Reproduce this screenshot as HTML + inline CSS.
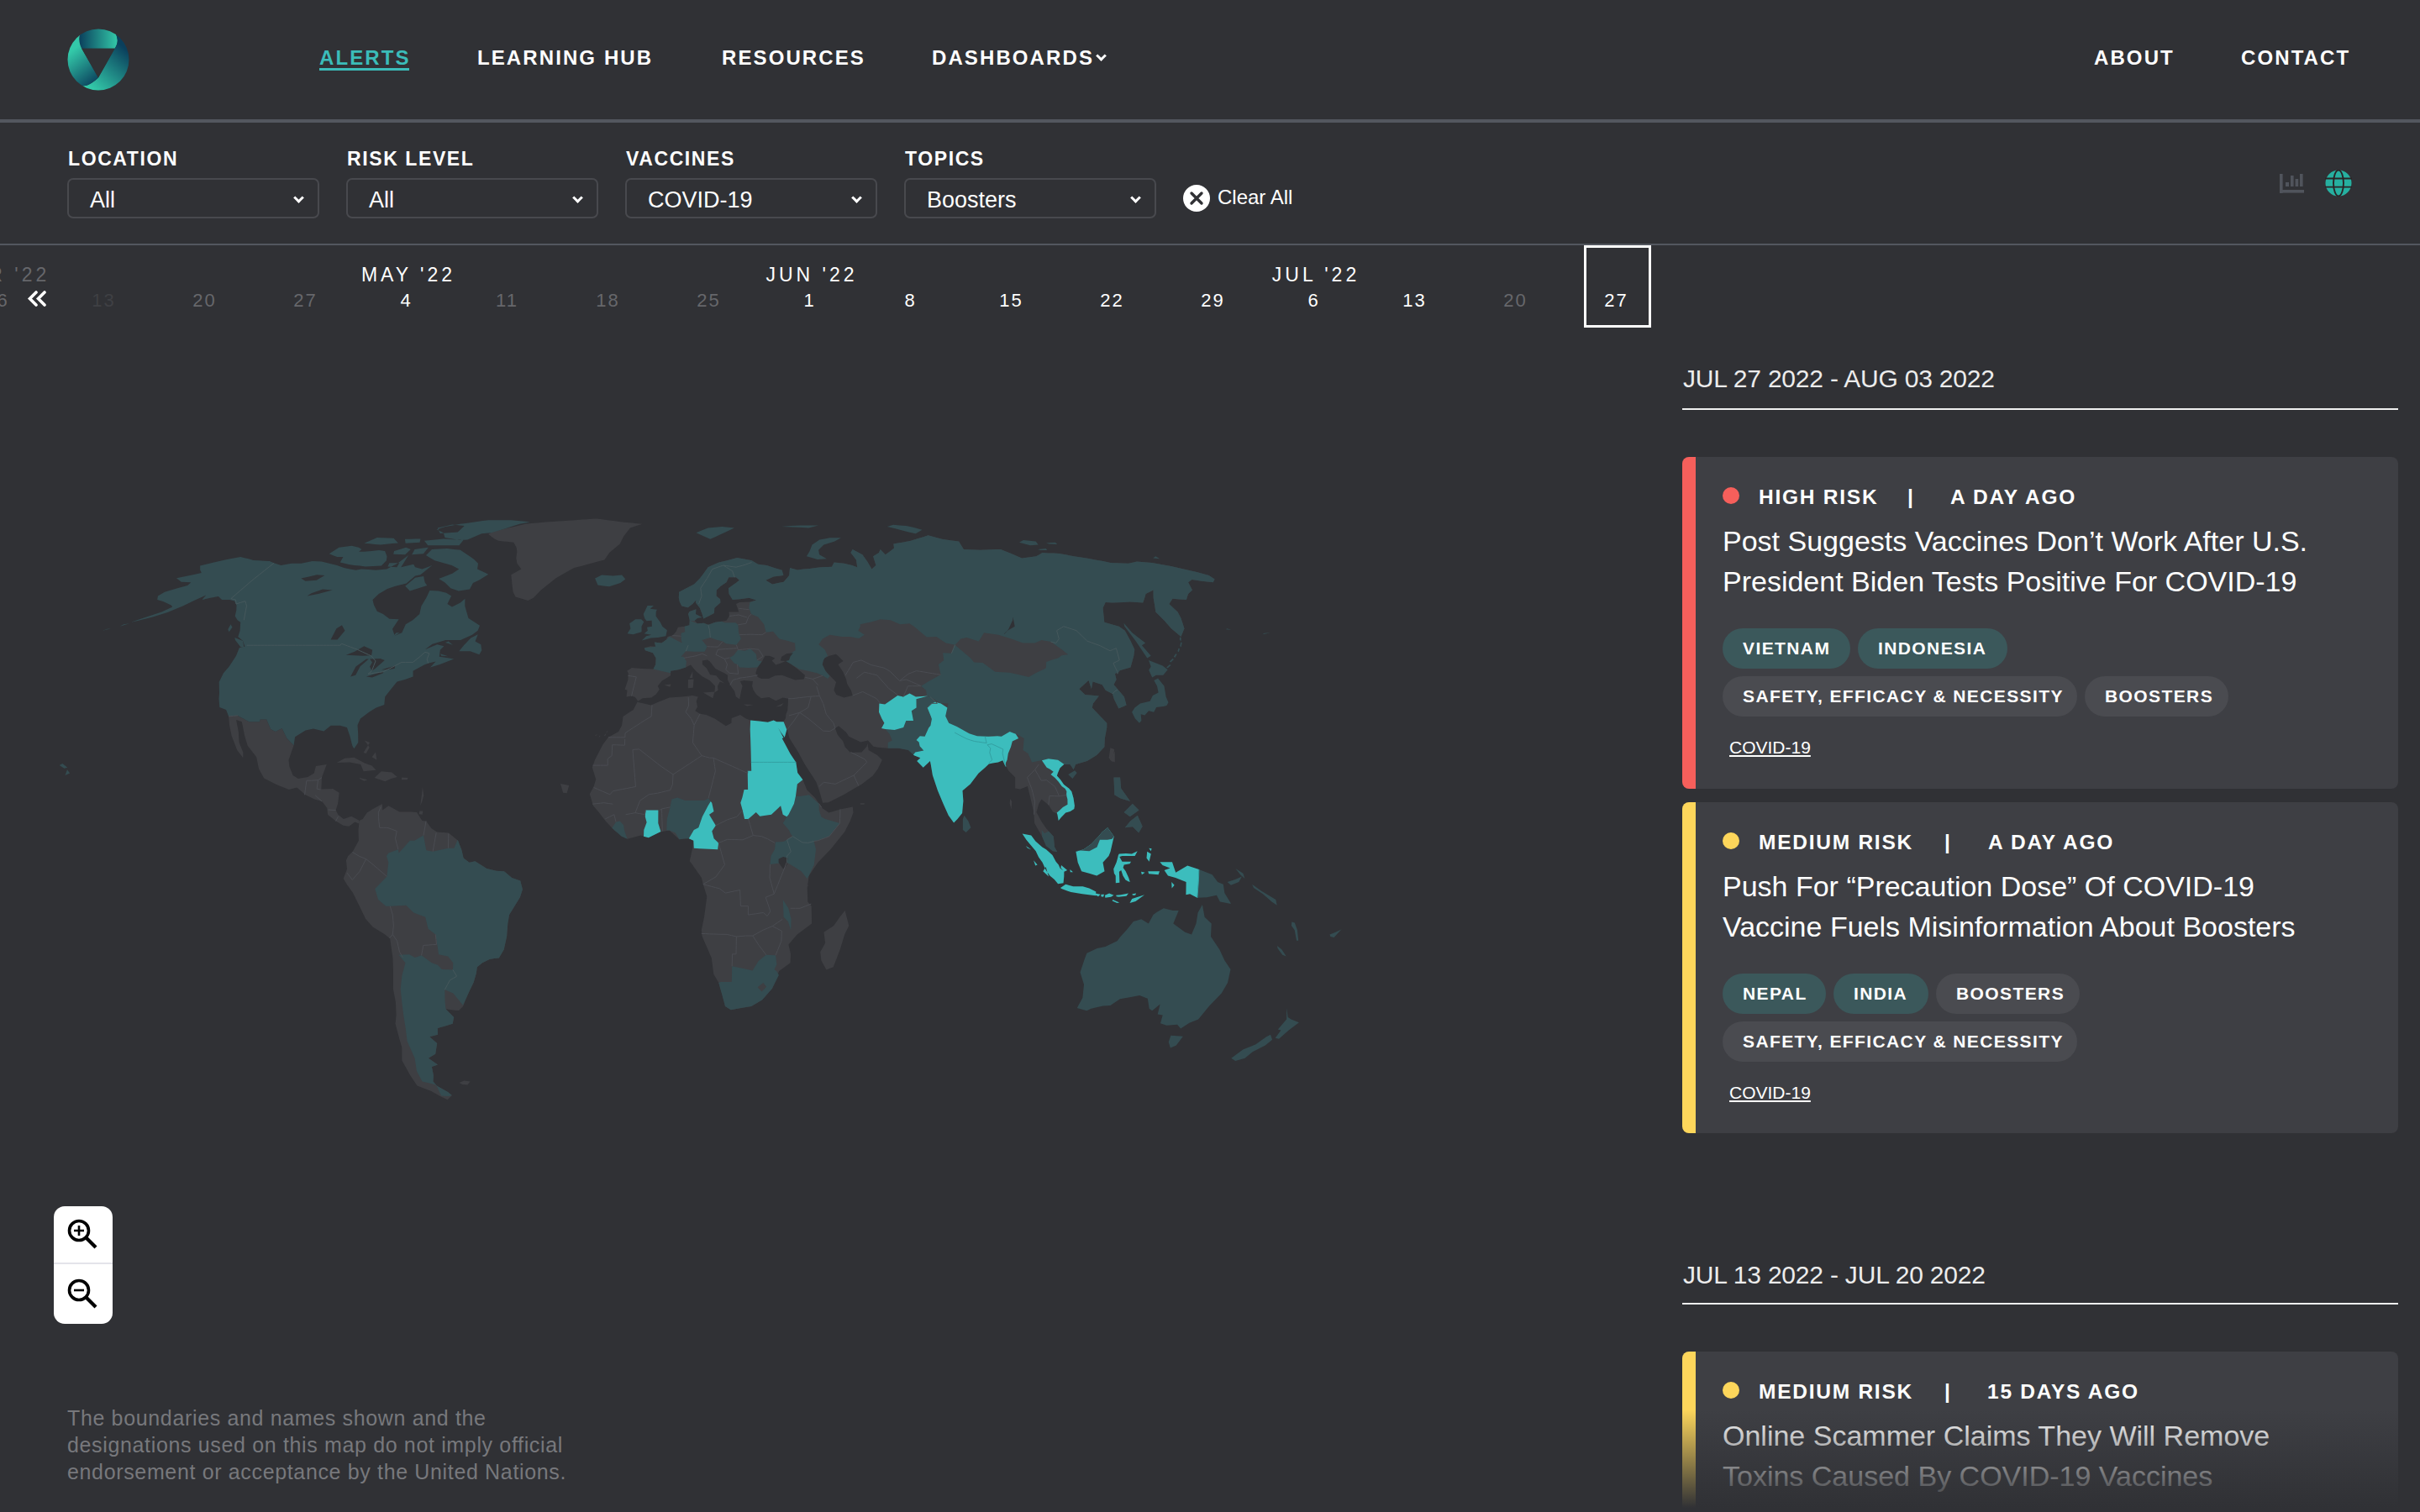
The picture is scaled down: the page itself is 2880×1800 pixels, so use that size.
<!DOCTYPE html>
<html><head><meta charset="utf-8">
<style>
*{margin:0;padding:0;box-sizing:border-box}
html,body{width:2880px;height:1800px;overflow:hidden;background:#303135;font-family:"Liberation Sans",sans-serif;color:#fff}
.a{position:absolute;white-space:nowrap}
.nav{font-weight:bold;font-size:24px;line-height:24px;letter-spacing:2.1px;color:#fff}
.flab{font-weight:bold;font-size:23px;line-height:23px;letter-spacing:1.6px;color:#fff}
.sel{position:absolute;top:212px;width:300px;height:48px;border:2px solid #48494e;border-radius:7px}
.sel span{position:absolute;left:25px;top:11px;font-size:27px;line-height:27px;color:#fff}
.sel i{position:absolute;right:18px;top:17px;width:9px;height:9px;border-right:3px solid #fff;border-bottom:3px solid #fff;transform:rotate(45deg)}
.mon{font-size:23px;line-height:23px;letter-spacing:4px;color:#e6e6e6}
.dt{font-size:22px;line-height:22px;letter-spacing:2px;text-align:center;width:100px;margin-left:-50px}
.w{color:#fff}.g{color:#66676b}.f{color:#3f4044}
.card{position:absolute;left:2002px;width:852px;background:#3e3f44;border-radius:8px;overflow:hidden}
.card .bar{position:absolute;left:0;top:0;bottom:0;width:16px}
.risk{position:absolute;left:91px;top:35px;font-weight:bold;font-size:24.5px;line-height:25px;letter-spacing:1.75px}
.dot{position:absolute;left:48px;top:36px;width:20px;height:20px;border-radius:50%}
.ttl{position:absolute;left:48px;top:76px;font-size:34px;line-height:48px;color:#fff;white-space:nowrap}
.pill{position:absolute;white-space:nowrap;height:48px;border-radius:24px;font-weight:bold;font-size:21px;line-height:48px;letter-spacing:1.4px;padding-left:24px;color:#fff}
.pt{background:#3b585b}.pg{background:#4a4b50}
.lnk{position:absolute;left:56px;font-size:21px;line-height:21px;color:#fff;text-decoration:underline}
.hdr{font-size:30px;line-height:30px;letter-spacing:-0.2px;color:#ececec}
.hline{position:absolute;left:2002px;width:852px;height:2px;background:#f0f0f0}
</style></head><body>
<!-- header -->
<svg class="a" style="left:76.5px;top:31px" width="80" height="80" viewBox="0 0 80 80">
<defs>
<clipPath id="cc"><circle cx="40" cy="40" r="36.5"/></clipPath>
<linearGradient id="lg1" x1="17" y1="18" x2="63" y2="18" gradientUnits="userSpaceOnUse"><stop offset="0" stop-color="#0a3f5c"/><stop offset="1" stop-color="#33c9a9"/></linearGradient>
<linearGradient id="lg2" x1="70" y1="25" x2="30" y2="72" gradientUnits="userSpaceOnUse"><stop offset="0" stop-color="#0a3f5c"/><stop offset="1" stop-color="#33c9a9"/></linearGradient>
<linearGradient id="lg3" x1="8" y1="30" x2="38" y2="68" gradientUnits="userSpaceOnUse"><stop offset="0" stop-color="#33c9a9"/><stop offset="1" stop-color="#0a3f5c"/></linearGradient>
</defs>
<g clip-path="url(#cc)">
<path d="M20.2 26.8L59.6 26.8C62 23 63.5 19 62.5 15C62 12 61 9.5 59.5 6L80 0L0 0L20.5 6C18.5 9 17 12 17.3 16C17.5 20 18.5 23.5 20.2 26.8Z" fill="url(#lg1)"/>
<path d="M59.6 26.8C62 23 63.5 19 62.5 15C62 12 61 9.5 59.5 6L80 0L80 80L10 80L22 71.3C26 71 29 70 32.5 67.5C35.5 65.5 38 63.5 40 61.4Z" fill="url(#lg2)"/>
<path d="M40 61.4C38 63.5 35.5 65.5 32.5 67.5C29 70 26 71 22 71.3L10 80L0 80L0 0L20.5 6C18.5 9 17 12 17.3 16C17.5 20 18.5 23.5 20.2 26.8Z" fill="url(#lg3)"/>
<path d="M20.2 26.8L59.6 26.8L40 61.4Z" fill="#303135"/>
</g>
</svg>
<div class="a nav" style="left:380px;top:57px;color:#3bbcb9">ALERTS</div>
<div class="a" style="left:380px;top:81px;width:107px;height:3px;background:#3bbcb9"></div>
<div class="a nav" style="left:568px;top:57px">LEARNING HUB</div>
<div class="a nav" style="left:859px;top:57px">RESOURCES</div>
<div class="a nav" style="left:1109px;top:57px">DASHBOARDS</div>
<div class="a" style="left:1306px;top:62px;width:9px;height:9px;border-right:3px solid #fff;border-bottom:3px solid #fff;transform:rotate(45deg)"></div>
<div class="a nav" style="left:2492px;top:57px">ABOUT</div>
<div class="a nav" style="left:2667px;top:57px">CONTACT</div>
<div class="a" style="left:0;top:142px;width:2880px;height:4px;background:#53575f"></div>

<!-- filters -->
<div class="a flab" style="left:81px;top:178px">LOCATION</div>
<div class="a flab" style="left:413px;top:178px">RISK LEVEL</div>
<div class="a flab" style="left:745px;top:178px">VACCINES</div>
<div class="a flab" style="left:1077px;top:178px">TOPICS</div>
<div class="sel" style="left:80px"><span>All</span><i></i></div>
<div class="sel" style="left:412px"><span>All</span><i></i></div>
<div class="sel" style="left:744px"><span>COVID-19</span><i></i></div>
<div class="sel" style="left:1076px"><span>Boosters</span><i></i></div>
<svg class="a" style="left:1408px;top:220px" width="32" height="32" viewBox="0 0 32 32"><circle cx="16" cy="16" r="16" fill="#fff"/><path d="M10 10L22 22M22 10L10 22" stroke="#303135" stroke-width="3.4" stroke-linecap="round"/></svg>
<div class="a" style="left:1449px;top:223px;font-size:24px;line-height:24px;color:#fff">Clear All</div>
<svg class="a" style="left:2712px;top:206px" width="32" height="26" viewBox="0 0 32 26"><g fill="#50545c"><rect x="1" y="1" width="3.6" height="23"/><rect x="1" y="20" width="29" height="3.6"/><rect x="8" y="11" width="4" height="5"/><rect x="14" y="3" width="3.6" height="13"/><rect x="19.6" y="7" width="3.6" height="9"/><rect x="25" y="1" width="3.6" height="15"/></g></svg>
<svg class="a" style="left:2767px;top:202px" width="32" height="32" viewBox="0 0 32 32"><circle cx="16" cy="16" r="15.5" fill="#26b0a0"/><g stroke="#2b2426" stroke-width="1.9" fill="none"><path d="M0 10.5H32M0 20.6H32"/><ellipse cx="16" cy="16" rx="6" ry="15.5"/></g></svg>
<div class="a" style="left:0;top:290px;width:2880px;height:2px;background:#53575f"></div>

<!-- timeline -->
<div id="tl">
<div class="a dt w" style="left:1923.5px;top:347px">27</div>
<div class="a dt g" style="left:1803.5px;top:347px">20</div>
<div class="a dt w" style="left:1683.5px;top:347px">13</div>
<div class="a dt w" style="left:1563.5px;top:347px">6</div>
<div class="a dt w" style="left:1443.5px;top:347px">29</div>
<div class="a dt w" style="left:1323.5px;top:347px">22</div>
<div class="a dt w" style="left:1203.5px;top:347px">15</div>
<div class="a dt w" style="left:1083.5px;top:347px">8</div>
<div class="a dt w" style="left:963.5px;top:347px">1</div>
<div class="a dt g" style="left:843.5px;top:347px">25</div>
<div class="a dt g" style="left:723.5px;top:347px">18</div>
<div class="a dt g" style="left:603.5px;top:347px">11</div>
<div class="a dt w" style="left:483.5px;top:347px">4</div>
<div class="a dt g" style="left:363.5px;top:347px">27</div>
<div class="a dt g" style="left:243.5px;top:347px">20</div>
<div class="a dt f" style="left:123.5px;top:347px">13</div>
<div class="a dt g" style="left:3.5px;top:347px">6</div>
<div class="a mon w" style="left:386.0px;width:200px;text-align:center;top:316px">MAY '22</div>
<div class="a mon w" style="left:866.0px;width:200px;text-align:center;top:316px">JUN '22</div>
<div class="a mon w" style="left:1466.0px;width:200px;text-align:center;top:316px">JUL '22</div>
<div class="a mon g" style="left:-96.5px;width:200px;text-align:center;top:316px">APR '22</div>
<div class="a" style="left:1885px;top:292px;width:80px;height:98px;border:3px solid #fff"></div>
<svg class="a" style="left:32px;top:346px" width="24" height="19" viewBox="0 0 24 19"><path d="M11 2L3.5 9.5L11 17M21 2L13.5 9.5L21 17" stroke="#fff" stroke-width="3.6" fill="none" stroke-linecap="round" stroke-linejoin="miter"/></svg>
</div>

<!-- map -->
<div id="map"><svg class="a" style="left:0;top:0" width="1700" height="1400" viewBox="0 0 1700 1400"><path fill="#3e3f43" d="M272.2 852.9L273.0 863.3L275.7 876.3L282.2 892.9L289.3 902.2L289.3 895.5L284.6 884.1L283.8 871.1L281.1 857.1L287.8 859.2L291.2 876.3L294.7 887.7L305.2 901.2L308.0 915.2L314.2 926.6L328.9 933.9L343.8 940.1L353.3 937.5L363.5 946.3L374.3 951.5L383.2 954.1L389.3 961.9L390.0 969.7L399.6 977.5L408.5 982.7L415.3 983.7L422.4 978.5L427.3 980.6L427.1 976.4L418.2 971.8L408.9 974.9L402.3 969.7L399.6 964.5L402.1 956.7L403.7 943.8L396.1 939.1L382.4 939.6L383.0 925.6L388.8 910.0L375.9 912.1L373.8 920.4L366.3 925.1L354.8 927.1L348.6 923.0L344.4 912.6L343.5 904.8L349.6 887.2L341.4 878.9L335.6 866.9L327.9 871.1L322.1 868.0L317.2 856.6L309.7 856.6L308.8 859.2L296.5 859.2L283.1 851.9ZM581.2 636.1L585.0 639.0L588.9 641.8L593.2 643.8L599.2 644.4L605.2 645.0L611.3 645.7L614.6 651.8L615.3 656.8L614.3 664.4L615.4 670.8L620.3 677.5L608.3 684.2L609.3 694.6L610.6 704.8L613.5 710.4L620.9 712.7L628.4 715.1L634.8 711.8L643.8 702.5L661.6 688.2L672.5 682.1L683.1 676.1L690.5 674.2L697.8 672.2L705.0 670.3L712.2 668.3L719.4 666.5L725.2 658.1L737.7 647.6L742.5 638.0L750.0 628.4L757.2 626.1L764.3 623.8L758.2 623.2L752.2 622.6L746.3 622.0L740.3 621.4L735.2 620.7L730.0 620.0L724.9 619.4L719.9 618.7L714.8 618.0L709.9 617.4L704.2 617.8L698.6 618.2L692.9 618.6L687.2 619.0L681.4 619.4L675.7 619.8L669.9 620.2L664.2 620.6L658.4 620.9L652.6 621.3L646.7 621.7L639.6 622.4L632.4 623.1L625.2 623.8L612.1 626.9L603.6 628.7L594.8 630.9L585.8 633.0ZM400.8 907.9L410.1 902.8L421.5 901.7L434.0 908.5L442.5 911.6L447.6 916.8L432.6 918.3L429.3 910.0L416.2 907.4ZM445.6 926.1L453.8 918.3L466.3 919.4L472.8 925.1L465.4 927.1L458.3 930.3ZM428.0 926.1L437.3 928.2L433.5 929.7L427.9 927.1ZM478.2 925.6L485.4 926.1L484.7 928.2L477.9 928.2ZM427.3 980.6L426.5 987.9L426.9 1000.8L419.8 1013.8L414.2 1019.0L411.9 1024.2L413.0 1034.6L408.7 1046.0L412.7 1052.7L420.0 1063.1L427.8 1078.7L435.0 1093.7L443.6 1103.6L458.2 1112.4L464.2 1117.6L465.8 1129.3L467.5 1141.0L468.0 1156.5L468.0 1166.9L467.9 1177.3L470.9 1192.9L471.6 1208.4L470.5 1218.8L475.3 1236.8L478.3 1247.1L478.4 1262.4L488.1 1280.1L496.4 1292.5L513.2 1299.0L523.8 1304.9L532.6 1309.3L537.9 1303.9L533.0 1299.9L519.8 1292.5L515.5 1287.5L515.9 1280.1L513.9 1270.0L521.0 1267.4L509.9 1259.8L518.2 1254.8L520.2 1241.9L511.3 1234.2L521.0 1231.7L520.9 1223.9L529.8 1221.4L538.7 1218.8L540.2 1211.0L530.5 1201.2L541.2 1202.7L546.0 1203.1L551.1 1198.1L554.0 1190.3L558.6 1179.9L563.7 1169.5L566.7 1159.1L567.9 1151.3L574.1 1146.2L582.7 1142.0L588.4 1141.0L593.8 1140.4L599.7 1130.6L603.1 1115.0L604.3 1099.4L606.1 1089.1L612.4 1078.7L618.9 1068.3L621.9 1058.7L619.3 1048.6L609.2 1045.0L600.0 1037.2L590.8 1036.7L579.3 1034.1L565.4 1025.2L558.6 1026.8L551.6 1021.6L549.5 1012.3L545.1 1000.8L533.9 991.5L520.2 990.5L513.5 986.3L507.0 977.5L502.4 977.0L496.0 967.1L489.2 966.6L475.5 966.6L462.4 959.3L455.2 964.5L454.9 956.9L443.9 963.0L436.7 967.6L431.7 974.9L427.5 977.0ZM546.4 1289.0L552.5 1286.5L559.6 1287.5L556.5 1291.5L550.4 1291.0ZM759.4 834.8L755.8 830.1L751.6 828.6L745.5 829.6L746.5 821.8L743.6 820.8L747.4 809.0L747.7 801.3L746.2 798.7L751.9 795.1L764.2 796.1L777.5 796.6L780.2 791.0L780.6 783.4L776.9 777.3L767.8 774.3L766.8 771.2L774.2 769.2L780.2 769.7L778.8 764.6L787.2 765.6L792.9 761.6L794.3 758.1L800.7 756.2L804.7 751.7L806.8 746.7L814.6 745.7L820.4 744.2L820.8 735.9L819.0 731.0L820.5 728.1L828.4 725.3L828.0 731.0L826.2 738.3L830.0 742.3L837.7 741.8L842.8 743.8L851.2 740.8L858.8 739.8L864.5 738.8L867.9 733.5L867.5 728.6L879.2 728.6L876.0 719.0L880.2 717.0L892.3 716.6L900.1 714.6L893.5 711.8L880.9 713.2L871.8 714.1L867.5 707.1L866.9 700.2L876.7 693.2L879.9 690.8L876.0 687.3L867.3 687.3L864.5 693.2L857.8 697.8L852.8 702.5L852.5 709.5L857.1 713.2L857.4 717.5L850.3 723.8L849.9 730.1L843.2 733.5L837.2 736.4L835.6 731.0L832.8 723.8L827.9 717.5L828.3 714.6L824.2 719.0L818.7 723.3L811.3 721.4L808.8 716.6L807.8 711.8L808.1 704.8L815.3 701.1L826.0 695.5L832.9 688.6L837.8 681.9L842.6 675.2L849.1 672.3L855.5 669.5L865.2 667.3L877.1 664.0L884.5 665.2L894.7 667.3L902.2 671.7L912.5 673.0L921.5 675.9L930.7 678.8L932.4 685.0L920.7 686.4L911.3 690.8L919.2 695.5L925.9 694.1L932.6 692.7L939.2 685.0L940.0 676.1L949.1 678.4L956.2 677.6L963.3 676.9L970.3 676.1L976.6 675.2L983.3 675.0L989.9 674.8L992.6 669.5L1004.7 670.8L1014.1 673.0L1020.2 675.2L1018.9 666.5L1012.4 658.1L1014.6 653.9L1026.4 660.2L1032.2 668.6L1037.5 677.5L1042.4 673.0L1039.1 662.3L1045.9 658.1L1047.7 653.9L1053.7 660.2L1059.0 656.4L1064.0 652.6L1063.3 647.6L1068.5 646.6L1073.7 645.7L1078.8 644.7L1083.9 643.8L1089.2 642.1L1094.4 640.5L1099.5 638.9L1104.5 637.2L1121.1 641.8L1131.1 643.2L1141.1 644.5L1146.9 653.9L1153.5 654.2L1160.1 654.4L1166.7 654.7L1172.8 654.5L1178.8 654.3L1184.9 654.1L1191.0 653.9L1203.4 659.1L1216.1 664.4L1221.8 663.7L1227.4 663.0L1233.0 662.3L1236.8 660.2L1240.5 658.1L1247.2 658.4L1254.0 658.6L1260.8 658.9L1269.5 660.6L1278.2 662.3L1286.5 663.5L1294.8 664.8L1303.7 666.5L1312.8 668.1L1321.7 669.9L1328.7 670.2L1335.7 670.5L1342.7 670.8L1347.8 669.7L1352.9 668.6L1362.1 669.2L1371.3 669.9L1382.4 671.9L1393.6 673.9L1408.8 677.5L1424.3 681.0L1438.8 685.0L1445.6 689.5L1443.8 693.2L1429.7 691.8L1418.5 689.9L1414.1 693.2L1419.0 702.5L1414.1 707.1L1411.9 714.1L1403.7 713.4L1395.5 712.7L1391.4 719.0L1401.6 728.6L1405.5 735.9L1409.5 748.2L1405.5 758.1L1393.9 748.2L1385.1 738.3L1375.3 728.6L1374.1 720.2L1372.6 711.8L1372.5 702.5L1368.1 704.8L1363.6 707.1L1362.1 712.3L1360.3 717.5L1352.5 717.0L1344.7 716.6L1337.6 716.9L1330.6 717.2L1323.5 717.5L1315.7 717.0L1312.6 723.8L1314.3 740.8L1331.7 745.7L1338.8 750.7L1345.5 763.1L1350.3 773.2L1349.3 780.8L1345.5 794.6L1332.6 798.2L1327.0 802.3L1328.6 809.0L1325.5 815.1L1337.9 829.6L1340.6 839.4L1331.3 843.6L1325.8 832.2L1323.9 826.0L1315.7 821.8L1311.5 815.1L1300.5 811.5L1298.9 820.3L1295.5 810.0L1288.1 816.7L1284.4 820.3L1291.4 827.0L1307.9 828.6L1300.9 837.4L1299.8 842.5L1309.8 852.9L1317.3 860.7L1317.3 865.9L1314.9 878.9L1314.4 889.3L1305.2 899.1L1293.8 905.9L1280.2 910.0L1277.6 916.2L1273.4 910.0L1266.2 910.0L1261.5 914.2L1258.8 920.4L1257.9 923.5L1262.1 928.2L1266.1 933.9L1272.1 938.6L1275.3 942.2L1277.5 950.0L1278.9 959.3L1278.3 963.0L1273.6 966.1L1268.2 967.6L1262.7 973.3L1259.7 977.0L1260.2 969.7L1253.1 966.6L1247.8 958.3L1239.5 951.5L1236.3 956.7L1233.5 967.1L1239.2 977.5L1245.1 986.3L1253.8 995.7L1255.1 1008.6L1258.4 1014.3L1252.9 1013.3L1244.9 1007.1L1240.1 995.7L1231.1 980.1L1230.3 967.1L1226.7 951.5L1222.9 936.0L1214.2 939.6L1208.2 938.6L1208.1 925.6L1200.4 917.8L1196.2 910.0L1193.3 905.3L1187.8 907.4L1181.2 908.5L1176.8 909.5L1172.4 913.7L1164.6 920.4L1154.7 933.4L1145.5 941.2L1146.4 953.6L1145.1 968.1L1139.5 974.9L1135.1 979.6L1128.8 970.7L1122.5 956.7L1116.0 941.2L1109.9 923.0L1107.7 910.0L1106.9 905.9L1098.7 913.7L1091.2 905.9L1095.3 902.2L1088.3 899.6L1081.0 892.9L1069.6 890.8L1056.7 890.8L1045.0 889.8L1039.5 888.7L1032.9 881.5L1024.3 883.5L1010.3 876.8L1006.7 871.6L998.0 864.3L993.9 866.9L996.8 874.7L1003.3 882.5L1005.7 889.3L1012.0 896.0L1025.4 895.5L1031.5 888.7L1032.4 885.1L1033.7 892.9L1044.0 899.1L1049.8 904.8L1044.8 915.2L1038.7 923.5L1025.7 933.4L1017.0 938.6L1003.8 946.3L994.9 950.8L985.9 955.2L979.1 955.7L975.0 941.2L971.3 930.8L964.6 920.4L957.8 910.0L949.4 894.4L939.6 878.9L936.8 868.5L936.3 868.5L933.8 877.8L926.1 866.4L924.3 859.2L932.6 859.2L934.9 855.0L935.4 850.3L937.2 845.7L937.8 837.4L938.1 831.7L931.5 830.6L923.3 834.3L915.2 830.1L905.8 831.2L900.4 827.0L896.7 821.8L895.1 816.7L895.9 811.0L885.3 810.0L880.8 811.0L883.6 816.7L881.9 823.4L880.2 832.2L875.8 829.6L874.2 822.9L869.7 816.7L865.9 809.0L866.1 803.8L861.8 801.3L851.3 796.1L844.8 787.4L841.9 785.4L835.8 786.4L835.9 791.0L840.9 795.6L845.2 803.3L852.3 804.3L856.7 809.5L862.3 813.6L856.8 811.5L854.0 816.7L854.6 821.8L850.4 824.4L851.0 816.7L844.5 810.0L836.1 805.4L828.5 799.2L821.9 791.5L816.1 794.6L807.3 797.2L798.2 798.7L798.0 804.3L793.7 806.9L787.7 810.5L782.8 816.7L784.8 820.8L780.8 826.5L775.1 830.6L764.7 831.2ZM758.5 835.8L774.7 839.4L783.5 835.8L796.5 830.6L811.5 829.6L824.4 828.1L830.8 829.6L828.7 834.8L830.0 841.5L827.4 846.2L833.1 849.8L840.5 850.9L850.6 855.5L863.9 864.3L870.4 860.7L870.7 855.0L881.0 850.9L887.7 855.5L893.1 857.6L903.4 858.6L913.8 859.7L920.6 857.6L924.3 859.2L926.1 866.4L930.7 878.9L940.6 897.6L946.9 907.4L949.2 919.9L955.4 928.2L960.4 940.6L969.8 949.5L977.9 961.4L979.3 962.4L986.3 967.6L999.9 963.5L1014.8 960.4L1015.5 967.6L1011.7 977.5L1005.1 990.5L996.8 1000.8L988.4 1011.2L973.4 1026.8L962.7 1042.4L960.7 1056.9L961.3 1073.5L965.7 1078.7L965.9 1089.1L966.0 1099.4L948.7 1112.4L938.4 1124.4L941.0 1135.8L940.6 1146.2L927.2 1156.0L923.1 1166.4L919.0 1176.8L907.2 1190.3L894.2 1198.1L882.0 1200.1L869.8 1202.2L863.0 1198.1L861.4 1190.3L855.3 1170.0L849.3 1159.7L846.8 1140.4L841.3 1127.7L835.7 1115.0L834.8 1107.2L838.0 1091.7L839.7 1079.5L841.3 1067.3L836.8 1052.7L834.9 1045.0L822.1 1026.8L820.7 1025.2L824.4 1008.6L825.3 1000.8L819.8 998.2L808.4 999.3L796.5 988.4L785.5 990.5L780.0 993.1L771.8 997.2L762.6 994.6L746.6 998.8L731.6 988.9L720.7 977.5L712.7 967.1L706.0 959.3L701.8 945.3L706.7 936.0L709.2 927.7L704.8 913.7L707.9 904.8L717.6 886.1L723.9 877.8L736.1 871.1L740.0 863.8L741.5 852.9L750.1 847.2L753.7 845.1ZM1005.6 1083.9L1010.3 1102.0L1005.2 1112.4L999.7 1130.6L995.7 1141.0L991.7 1151.3L983.4 1154.5L977.4 1143.6L976.2 1133.2L982.1 1122.8L980.5 1109.8L992.2 1102.0L999.4 1091.7ZM1319.6 902.2L1321.4 890.3L1326.2 891.9L1324.1 907.4ZM820.6 806.9L824.3 799.2L824.3 806.9ZM818.8 819.3L818.9 809.0L825.6 808.4L824.8 818.7ZM836.7 824.4L850.3 823.4L848.4 831.2ZM884.8 838.4L896.9 838.9L889.2 840.5ZM923.0 841.5L932.5 836.9L929.9 840.5ZM1326.2 946.3L1325.9 936.0L1325.4 925.6L1333.1 925.6L1334.2 938.6L1345.2 954.1L1333.5 950.5ZM1338.8 985.3L1345.1 977.5L1353.8 970.7L1359.7 983.7L1355.2 991.5L1347.9 984.2ZM1337.5 967.1L1347.8 956.7L1355.5 964.5L1344.8 972.3Z"/><path fill="#344c51" d="M326.1 670.3L320.7 668.1L314.3 667.7L307.8 667.3L301.4 666.9L295.9 665.2L291.0 664.2L286.3 663.1L270.0 666.0L254.6 669.5L238.1 673.5L238.2 678.4L239.8 681.9L229.7 684.2L219.9 686.2L210.0 688.2L215.7 692.7L227.3 693.2L223.2 696.9L211.1 700.2L196.0 704.8L187.9 709.5L187.2 714.1L194.1 716.1L198.9 718.2L203.7 720.4L205.2 722.4L192.4 728.6L174.2 734.4L155.6 740.8L162.9 739.3L181.8 734.4L199.3 729.1L217.5 721.4L233.0 714.1L245.3 708.5L240.3 714.1L250.4 711.8L259.9 709.9L264.1 714.1L273.2 714.1L279.1 715.6L281.5 720.4L281.3 726.2L279.7 733.5L282.6 738.3L286.2 740.8L286.0 743.3L285.6 750.7L283.3 758.1L289.1 763.1L291.4 769.7L284.8 771.2L281.0 780.8L272.7 793.6L266.0 801.3L260.7 812.0L261.0 825.5L260.5 831.7L261.3 842.0L269.1 845.1L272.2 852.9L283.1 851.9L296.5 859.2L308.8 859.2L309.7 856.6L317.2 856.6L322.1 868.0L327.9 871.1L335.6 866.9L341.4 878.9L349.6 887.2L351.1 877.3L363.6 869.5L372.9 867.5L385.4 870.6L393.7 863.8L404.7 863.8L412.9 865.9L416.4 876.3L419.3 887.7L421.3 891.3L426.3 884.1L426.2 873.7L425.5 863.3L428.9 855.5L439.9 847.2L447.7 842.5L457.3 838.9L458.2 829.6L465.4 820.3L472.5 811.5L481.9 809.0L491.6 805.4L491.5 798.7L504.8 791.5L510.1 789.5L518.6 787.4L512.0 794.6L523.5 791.0L540.2 784.4L534.4 783.4L522.8 781.8L523.8 773.7L528.4 769.2L520.3 767.2L505.9 773.2L514.5 766.7L530.3 762.1L539.2 762.1L548.2 762.1L561.9 755.7L568.6 750.7L571.0 744.7L564.9 740.8L557.5 735.9L555.3 728.6L553.3 721.4L553.4 712.7L547.9 717.5L538.0 722.4L532.4 719.0L537.1 709.5L531.1 705.8L521.8 703.4L511.4 703.0L507.3 711.8L501.4 721.4L499.3 731.0L491.2 738.3L482.8 743.3L478.3 753.2L469.7 756.7L467.0 748.7L474.6 737.3L463.5 736.8L455.9 731.0L448.8 727.7L444.9 719.9L443.5 714.1L450.8 707.1L461.0 701.1L470.6 697.8L483.6 694.6L494.2 685.5L500.4 684.2L514.3 673.0L502.4 677.5L494.1 675.2L492.1 671.7L477.3 675.2L486.1 661.0L473.0 670.8L460.2 677.5L447.2 678.8L438.5 678.1L429.9 677.5L423.5 678.8L416.4 677.5L409.4 676.1L401.0 673.0L391.8 670.8L382.7 668.6L371.7 668.1L358.6 670.8L347.1 670.8L334.3 673.0ZM559.0 701.6L545.8 703.4L536.3 700.2L529.5 693.6L522.2 689.0L538.3 682.8L546.2 677.5L537.6 673.0L531.4 671.2L525.3 669.5L517.3 667.3L512.1 664.2L507.0 661.0L514.0 653.9L523.0 653.5L532.1 653.0L540.0 653.9L547.9 654.7L551.9 657.5L556.0 660.2L560.1 663.1L564.2 666.0L569.0 670.8L568.1 677.5L574.6 680.6L581.2 683.7L569.9 690.8L562.9 694.1ZM453.9 673.5L444.3 673.9L434.7 674.4L428.2 673.6L421.7 672.9L415.2 672.1L410.0 670.8L404.8 669.5L408.8 662.3L422.1 656.8L433.3 656.8L442.2 656.0L451.1 655.1L458.1 656.0L460.5 662.3L459.9 667.3ZM420.1 662.3L410.7 662.7L401.3 663.1L396.5 661.2L391.8 659.3L403.4 651.8L411.1 650.7L418.6 649.7L426.9 651.8L430.5 653.9ZM556.4 642.6L573.2 635.3L584.7 634.2L599.0 630.0L608.8 626.7L618.3 623.8L630.5 621.4L624.9 620.8L619.4 620.3L613.8 619.7L608.3 619.2L602.9 619.2L597.5 619.2L592.1 619.2L586.6 619.2L581.2 619.2L574.5 620.1L567.8 621.1L561.1 622.0L554.2 622.9L547.4 623.8L538.8 625.4L530.2 626.9L519.6 630.3L523.6 632.3L527.7 634.2L529.5 639.9L535.2 641.0L541.1 642.0L546.9 643.0ZM546.4 649.3L540.2 649.3L534.0 649.3L527.8 649.3L521.6 649.3L515.4 649.3L509.2 649.3L505.0 643.8L512.6 643.0L520.1 642.2L527.6 641.5L533.5 641.8L539.5 642.2L545.5 642.6L551.5 643.0ZM473.9 646.4L466.8 647.1L459.8 647.7L452.8 648.4L446.2 647.9L439.8 647.3L433.4 646.8L448.7 639.9L455.3 640.2L461.9 640.4L468.5 640.7L471.1 643.6ZM482.2 660.2L475.2 660.0L468.2 659.8L469.1 656.0L483.2 651.8L488.8 653.9ZM503.9 659.3L497.0 659.8L490.2 660.2L493.5 653.9L501.7 652.8L509.8 651.8ZM544.7 633.4L537.8 633.9L530.8 634.4L523.8 634.9L522.2 631.7L520.7 628.4L529.5 626.4L538.1 624.4L542.9 624.9L547.8 625.5L552.7 626.0ZM499.5 645.7L491.1 646.3L482.6 646.8L481.9 641.8L488.1 641.7L494.3 641.6L500.5 641.5ZM508.3 696.9L498.1 700.2L487.8 703.4L482.2 697.8L494.1 687.7L504.1 685.9L505.6 693.2ZM472.3 675.2L461.4 674.4L463.4 670.3L475.4 669.9ZM546.3 775.3L559.6 775.3L570.4 779.3L573.3 774.3L572.3 767.2L565.5 763.6L568.8 755.2L560.3 759.6L552.0 768.2ZM708.1 688.6L716.1 684.6L722.9 685.0L729.7 685.5L740.1 684.6L744.3 689.5L738.3 694.1L725.1 698.3L718.2 697.4L711.4 696.4ZM544.6 999.8L545.1 1000.8L549.5 1012.3L551.6 1021.6L558.6 1026.8L565.4 1025.2L579.3 1034.1L590.8 1036.7L600.0 1037.2L609.2 1045.0L619.3 1048.6L621.9 1058.7L618.9 1068.3L612.4 1078.7L606.1 1089.1L604.3 1099.4L603.1 1115.0L599.7 1130.6L593.8 1140.4L588.4 1141.0L582.7 1142.0L574.1 1146.2L567.9 1151.3L566.7 1159.1L563.7 1169.5L558.6 1179.9L554.0 1190.3L551.2 1196.5L550.8 1196.5L539.3 1182.5L529.3 1178.3L535.4 1166.9L543.6 1162.2L538.9 1154.5L539.3 1146.2L533.1 1138.4L522.1 1136.3L520.5 1125.4L518.3 1112.4L509.6 1105.7L506.2 1091.7L492.2 1086.5L483.4 1077.7L473.8 1078.2L464.3 1078.7L459.3 1078.7L450.1 1070.9L446.3 1057.9L460.4 1043.4L462.3 1026.8L460.0 1019.0L462.4 1015.4L473.9 1011.2L474.7 1015.4L487.8 1000.8L493.3 1000.8L504.0 994.6L506.1 1006.0L507.3 1012.3L515.1 1013.8L524.3 1011.7L533.5 1009.7L540.4 1009.7ZM474.6 1136.8L482.5 1146.2L478.3 1161.7L476.7 1177.3L478.3 1192.9L480.2 1208.4L482.7 1223.9L484.6 1239.4L489.0 1249.6L493.6 1259.8L495.9 1275.0L502.5 1287.5L517.1 1291.0L519.7 1293.0L525.1 1304.4L533.3 1304.9L537.9 1303.9L533.0 1299.9L519.8 1292.5L515.5 1287.5L515.9 1280.1L513.9 1270.0L521.0 1267.4L509.9 1259.8L518.2 1254.8L520.2 1241.9L511.3 1234.2L521.0 1231.7L520.9 1223.9L529.8 1221.4L538.7 1218.8L540.2 1211.0L530.5 1201.2L529.6 1192.9L529.3 1178.3L535.4 1166.9L543.6 1162.2L538.9 1154.5L525.9 1153.9L520.8 1148.8L513.8 1146.2L501.6 1137.3L493.8 1139.9L487.1 1136.3ZM763.9 762.6L774.8 759.6L782.8 759.1L792.4 757.2L793.9 750.2L788.3 745.7L785.8 740.8L782.3 735.9L780.6 733.5L780.7 728.1L782.0 725.7L773.8 724.8L777.9 720.9L770.5 720.9L768.1 726.2L765.7 731.0L767.1 735.9L769.4 739.3L775.6 738.8L775.9 745.7L770.0 746.7L770.8 750.7L766.6 754.2L775.1 755.7L769.1 757.2ZM763.6 752.2L763.5 745.7L766.3 740.3L763.1 737.3L756.2 737.3L749.2 742.3L750.4 748.2L746.6 754.2L753.5 755.2ZM1355.9 860.7L1358.4 858.1L1357.7 850.3L1362.4 851.4L1367.0 846.2L1373.2 847.7L1376.2 842.0L1384.5 841.0L1388.4 840.0L1390.5 836.3L1387.6 829.6L1385.5 816.7L1378.1 807.4L1373.3 810.0L1377.0 816.7L1378.6 824.4L1371.9 828.1L1368.6 834.8L1356.9 837.4L1350.4 842.5L1347.1 847.7L1350.9 855.5ZM1371.2 806.4L1375.9 803.8L1384.3 803.8L1389.7 797.2L1383.6 792.5L1367.0 785.9L1369.7 793.6L1367.2 797.7ZM1271.2 922.0L1279.1 917.3L1281.7 919.9L1276.4 927.1ZM1365.3 783.4L1369.7 780.8L1358.9 768.2L1363.2 765.6L1347.4 753.2L1337.4 741.8L1338.3 745.7L1351.5 763.1L1358.4 773.2ZM1145.9 987.9L1145.9 974.9L1147.5 970.7L1152.4 977.5L1155.4 985.3L1149.7 991.0ZM1326.2 946.3L1325.9 936.0L1325.4 925.6L1333.1 925.6L1334.2 938.6L1345.2 954.1L1333.5 950.5ZM1338.8 985.3L1345.1 977.5L1353.8 970.7L1359.7 983.7L1355.2 991.5L1347.9 984.2ZM1337.5 967.1L1347.8 956.7L1355.5 964.5L1344.8 972.3ZM1426.8 1035.1L1442.7 1041.3L1449.1 1050.1L1455.8 1052.7L1457.3 1063.1L1465.2 1076.1L1451.9 1073.5L1447.9 1065.7L1436.3 1068.3L1424.8 1068.8L1425.7 1057.6L1426.5 1046.3ZM1460.6 1050.1L1469.9 1047.0L1477.9 1043.4L1474.3 1050.1L1464.9 1053.8ZM1430.9 1077.1L1433.6 1091.7L1441.7 1099.4L1441.0 1115.0L1451.4 1130.6L1457.4 1143.6L1464.5 1153.9L1461.0 1170.0L1453.7 1182.5L1439.2 1197.5L1426.1 1213.6L1415.4 1217.7L1405.1 1224.5L1401.1 1219.8L1388.3 1220.8L1381.0 1218.2L1383.7 1208.4L1377.7 1207.4L1380.6 1195.5L1371.1 1203.2L1367.7 1200.7L1365.8 1188.7L1356.2 1185.1L1344.5 1187.2L1332.9 1189.2L1321.4 1197.0L1312.5 1197.5L1298.5 1200.7L1293.3 1203.2L1281.8 1200.1L1288.4 1187.7L1290.0 1172.1L1285.5 1157.6L1291.0 1141.0L1293.4 1134.7L1305.6 1129.0L1315.4 1127.0L1329.5 1120.2L1333.5 1115.0L1340.6 1107.2L1348.9 1096.9L1358.3 1094.3L1366.8 1099.4L1372.5 1089.1L1376.5 1086.0L1384.8 1081.3L1395.9 1083.9L1402.7 1083.9L1399.5 1091.7L1396.3 1099.4L1410.3 1109.8L1418.0 1112.4L1423.5 1099.4L1425.6 1086.5ZM1393.4 1232.7L1407.9 1233.7L1399.8 1244.5L1392.9 1247.6L1390.7 1240.4ZM1531.2 1200.1L1532.7 1211.0L1536.6 1213.6L1545.9 1217.2L1533.7 1226.5L1522.0 1236.8L1517.7 1235.8L1524.4 1226.5L1520.8 1225.5L1531.1 1213.6ZM1512.0 1231.7L1514.1 1237.8L1505.8 1244.5L1490.6 1252.2L1481.6 1259.8L1470.2 1262.9L1465.3 1259.8L1479.2 1249.6L1494.1 1243.5L1507.1 1234.2ZM959.9 662.3L963.6 656.0L966.5 648.4L971.0 645.5L975.3 642.6L981.4 641.5L987.4 640.3L994.1 640.3L1000.9 640.3L993.3 644.5L986.9 646.4L980.4 648.4L974.1 654.7L975.1 660.2L983.9 665.2L972.9 666.0ZM1055.8 626.9L1063.0 624.7L1070.8 625.4L1078.6 626.0L1087.8 628.1L1097.4 630.7L1093.6 633.0L1089.6 635.3L1081.6 633.4L1073.8 631.5L1064.6 629.0ZM1213.0 645.7L1217.9 643.0L1225.2 643.8L1232.6 644.5L1235.7 648.4L1226.0 649.3ZM1245.0 646.4L1250.5 646.1L1255.9 645.7L1258.3 648.0L1248.5 647.6ZM1235.0 653.9L1244.9 653.0L1246.2 655.1L1238.3 655.1ZM1372.2 664.4L1375.2 662.3L1380.2 665.2ZM930.0 626.9L935.5 626.5L940.9 626.1L946.3 625.7L951.6 625.4L957.2 625.4L962.8 625.4L968.4 625.4L974.0 625.4L968.2 626.9L962.2 628.4L955.7 628.1L949.3 627.8L942.8 627.5L936.4 627.2ZM828.5 634.2L835.6 631.3L842.6 628.4L848.2 627.9L853.8 627.4L859.4 626.9L866.6 627.7L873.9 628.4L868.7 631.0L863.4 633.5L857.9 636.1L851.7 639.0L845.2 641.8L836.7 638.0ZM894.5 669.5L887.8 675.2L893.6 679.7L893.1 686.4L897.7 693.2L896.4 700.2L891.0 707.1L890.9 711.8L900.1 714.6L892.3 717.0L891.3 723.8L894.1 731.0L902.2 734.4L909.2 743.3L911.6 752.7L920.1 751.7L927.4 760.6L937.7 763.1L946.1 765.6L946.6 774.3L940.7 777.8L940.3 780.8L935.0 786.9L939.6 790.0L949.4 795.6L950.8 796.6L961.5 798.7L972.3 801.3L979.0 804.3L985.1 807.9L987.5 804.9L982.6 798.7L978.8 791.0L981.5 783.4L985.1 780.8L981.5 773.2L974.3 767.2L978.9 760.6L987.5 755.7L1002.0 758.1L1011.9 758.1L1022.3 760.1L1028.8 755.7L1021.4 750.7L1023.8 745.7L1023.7 743.3L1037.4 740.3L1047.8 737.3L1059.7 738.3L1071.2 743.3L1082.4 742.3L1087.7 745.7L1102.9 758.6L1114.5 758.1L1125.7 765.6L1136.5 767.7L1143.4 760.6L1150.6 759.1L1164.7 763.6L1171.1 753.2L1179.6 754.4L1188.1 755.7L1205.1 761.1L1217.5 765.6L1231.5 765.6L1239.5 762.1L1250.6 764.1L1256.6 765.6L1260.3 760.6L1257.6 750.7L1265.8 745.7L1281.0 750.7L1293.8 763.1L1309.2 768.7L1321.1 774.8L1328.4 771.7L1332.2 785.9L1324.9 789.5L1329.8 799.7L1329.9 802.3L1332.6 798.2L1345.5 794.6L1349.3 780.8L1350.3 773.2L1345.5 763.1L1338.8 750.7L1331.7 745.7L1314.3 740.8L1312.6 723.8L1315.7 717.0L1323.5 717.5L1330.6 717.2L1337.6 716.9L1344.7 716.6L1352.5 717.0L1360.3 717.5L1362.1 712.3L1363.6 707.1L1368.1 704.8L1372.5 702.5L1372.6 711.8L1374.1 720.2L1375.3 728.6L1385.1 738.3L1393.9 748.2L1405.5 758.1L1409.5 748.2L1405.5 735.9L1401.6 728.6L1391.4 719.0L1395.5 712.7L1403.7 713.4L1411.9 714.1L1414.1 707.1L1419.0 702.5L1414.1 693.2L1418.5 689.9L1429.7 691.8L1443.8 693.2L1445.6 689.5L1438.8 685.0L1424.3 681.0L1408.8 677.5L1393.6 673.9L1382.4 671.9L1371.3 669.9L1362.1 669.2L1352.9 668.6L1347.8 669.7L1342.7 670.8L1335.7 670.5L1328.7 670.2L1321.7 669.9L1312.8 668.1L1303.7 666.5L1294.8 664.8L1286.5 663.5L1278.2 662.3L1269.5 660.6L1260.8 658.9L1254.0 658.6L1247.2 658.4L1240.5 658.1L1236.8 660.2L1233.0 662.3L1227.4 663.0L1221.8 663.7L1216.1 664.4L1203.4 659.1L1191.0 653.9L1184.9 654.1L1178.8 654.3L1172.8 654.5L1166.7 654.7L1160.1 654.4L1153.5 654.2L1146.9 653.9L1141.1 644.5L1131.1 643.2L1121.1 641.8L1104.5 637.2L1099.5 638.9L1094.4 640.5L1089.2 642.1L1083.9 643.8L1078.8 644.7L1073.7 645.7L1068.5 646.6L1063.3 647.6L1064.0 652.6L1059.0 656.4L1053.7 660.2L1047.7 653.9L1045.9 658.1L1039.1 662.3L1042.4 673.0L1037.5 677.5L1032.2 668.6L1026.4 660.2L1014.6 653.9L1012.4 658.1L1018.9 666.5L1020.2 675.2L1014.1 673.0L1004.7 670.8L992.6 669.5L989.9 674.8L983.3 675.0L976.6 675.2L970.3 676.1L963.3 676.9L956.2 677.6L949.1 678.4L940.0 676.1L939.2 685.0L932.6 692.7L925.9 694.1L919.2 695.5L911.3 690.8L920.7 686.4L932.4 685.0L930.7 678.8L921.5 675.9L912.5 673.0L902.2 671.7L894.7 667.3ZM1309.6 814.6L1300.5 811.5L1298.9 820.3L1295.5 810.0L1288.1 816.7L1284.4 820.3L1291.4 827.0L1307.9 828.6L1300.9 837.4L1299.8 842.5L1309.8 852.9L1317.3 860.7L1317.3 865.9L1314.9 878.9L1314.4 889.3L1305.2 899.1L1293.8 905.9L1280.2 910.0L1277.6 916.2L1273.4 910.0L1266.7 910.0L1259.1 904.8L1247.7 903.3L1239.0 905.3L1228.1 907.4L1223.5 897.0L1217.5 892.9L1218.7 878.9L1211.3 874.7L1201.7 871.1L1191.8 876.8L1187.2 876.3L1176.3 876.8L1174.9 876.8L1162.9 876.3L1153.5 873.2L1138.8 864.9L1129.2 860.7L1125.2 852.4L1128.4 837.4L1118.7 836.9L1107.0 829.6L1103.1 829.1L1102.1 821.8L1096.2 816.7L1104.5 811.5L1113.5 806.4L1119.6 803.3L1116.9 791.0L1123.3 785.9L1122.1 777.3L1132.4 777.8L1136.5 767.7L1155.0 783.4L1159.2 788.4L1169.6 788.9L1184.2 799.7L1192.7 800.2L1201.2 800.7L1212.7 803.3L1224.3 805.9L1232.7 801.3L1244.7 795.6L1245.2 787.9L1252.2 785.6L1259.1 783.4L1263.6 780.3L1271.1 779.3L1263.7 773.2L1250.6 764.1L1256.6 765.6L1260.3 760.6L1257.6 750.7L1265.8 745.7L1281.0 750.7L1293.8 763.1L1309.2 768.7L1321.1 774.8L1328.4 771.7L1332.2 785.9L1324.9 789.5L1329.8 799.7L1328.5 801.3L1324.6 801.8L1319.8 804.3L1312.8 806.9ZM1056.7 890.8L1069.6 890.8L1081.0 892.9L1086.9 898.6L1089.3 895.5L1099.3 893.4L1094.6 888.2L1093.6 883.5L1090.5 881.0L1094.8 876.3L1100.6 876.8L1105.2 866.4L1107.4 863.8L1108.9 856.0L1107.9 852.9L1103.6 842.5L1109.0 837.4L1115.4 837.4L1107.0 829.6L1104.2 828.6L1090.5 832.2L1090.6 842.5L1084.8 846.2L1087.0 858.1L1078.3 858.1L1075.2 865.9L1064.6 869.0L1053.5 868.0L1058.6 873.7L1061.8 881.5L1056.7 884.1ZM1309.6 814.6L1312.8 806.9L1319.8 804.3L1324.6 801.8L1328.5 801.3L1327.0 802.3L1328.6 809.0L1325.5 815.1L1337.9 829.6L1340.6 839.4L1331.3 843.6L1325.8 832.2L1323.9 826.0L1315.7 821.8L1311.5 815.1ZM1239.7 987.9L1243.1 992.0L1248.0 989.4L1253.8 995.7L1255.1 1008.6L1258.4 1014.3L1252.9 1013.3L1244.9 1007.1L1240.1 995.7ZM793.3 988.4L796.5 988.4L803.8 991.5L808.4 999.3L815.3 998.2L819.8 998.2L825.8 987.9L831.3 985.3L835.8 972.3L842.6 959.3L845.8 954.1L843.0 950.5L838.1 953.1L826.7 953.1L815.3 953.1L806.2 949.5L799.4 951.5L797.5 960.9L793.8 974.9ZM931.8 980.1L936.3 972.3L938.5 969.7L945.0 956.7L947.0 947.4L951.6 947.9L962.9 946.3L969.9 952.6L974.6 956.7L974.8 964.5L977.3 972.3L982.0 974.9L999.4 980.1L986.9 995.7L973.2 1000.8L968.7 1001.4L961.8 1003.4L954.9 1002.9L945.8 998.2L941.1 993.1L938.8 987.9ZM936.6 999.8L943.4 995.7L954.9 1002.9L961.8 1003.4L968.7 1001.4L971.0 1011.2L968.8 1029.4L962.7 1042.4L960.4 1046.0L953.6 1037.2L936.7 1026.8L936.7 1019.0L941.3 1013.8ZM916.5 1028.9L926.4 1027.8L936.2 1026.8L936.7 1019.0L941.3 1013.8L936.6 999.8L932.0 1001.9L922.9 1002.4L922.0 1011.2L917.5 1019.0ZM855.3 1170.0L859.2 1184.0L863.0 1198.1L869.8 1202.2L882.0 1200.1L894.2 1198.1L907.2 1190.3L919.0 1176.8L926.9 1160.7L924.5 1156.5L921.5 1153.9L924.4 1148.2L923.0 1137.3L911.8 1136.8L902.7 1144.1L895.6 1155.5L884.6 1152.9L871.2 1150.3L870.8 1169.0L857.5 1169.0ZM728.4 985.8L733.0 978.5L737.6 977.5L742.1 982.2L743.0 988.4L746.6 998.8L739.7 995.7ZM931.7 1070.9L938.3 1081.3L941.6 1094.3L941.2 1107.2L937.9 1096.9L932.6 1091.7L932.2 1081.3ZM777.5 796.6L787.8 799.0L798.1 801.3L798.2 798.7L807.3 797.2L816.1 794.6L816.9 787.4L813.7 781.8L810.5 781.8L816.2 775.3L819.1 768.2L811.9 765.6L805.6 762.6L796.7 757.7L792.9 761.6L787.2 765.6L778.8 764.6L780.2 769.7L766.8 771.2L767.8 774.3L776.9 777.3L780.6 783.4L780.2 791.0ZM810.5 758.1L810.8 762.6L811.9 765.6L819.1 768.2L816.2 775.3L826.3 775.8L838.5 775.8L841.6 769.7L835.4 762.1L845.3 759.1L844.6 750.7L842.8 743.8L837.7 741.8L830.0 742.3L822.3 739.3L820.8 738.8L820.4 744.2L814.6 745.7L815.3 752.2L810.6 753.7ZM842.8 743.8L844.6 750.7L845.3 759.1L852.1 761.6L860.1 763.6L864.2 766.2L876.3 767.7L881.8 760.6L879.1 753.2L878.3 743.8L875.4 741.3L862.7 741.3L858.8 739.8L851.2 740.8ZM868.4 782.9L873.1 780.3L878.0 773.7L886.5 774.8L893.1 772.2L899.8 778.8L900.9 785.9L906.8 787.4L903.2 792.5L900.9 794.6L890.6 795.1L880.2 794.6L877.5 791.0L873.7 789.5ZM837.2 736.4L835.6 731.0L832.8 723.8L827.9 717.5L828.3 714.6L824.2 719.0L818.7 723.3L811.3 721.4L808.8 716.6L807.8 711.8L808.1 704.8L815.3 701.1L826.0 695.5L832.9 688.6L837.8 681.9L842.6 675.2L849.1 672.3L855.5 669.5L865.2 667.3L877.1 664.0L884.5 665.2L894.7 667.3L894.5 669.5L887.8 675.2L893.6 679.7L893.1 686.4L897.7 693.2L896.4 700.2L891.0 707.1L890.9 711.8L880.9 713.2L871.8 714.1L867.5 707.1L866.9 700.2L876.7 693.2L879.9 690.8L876.0 687.3L867.3 687.3L864.5 693.2L857.8 697.8L852.8 702.5L852.5 709.5L857.1 713.2L857.4 717.5L850.3 723.8L849.9 730.1L843.2 733.5ZM819.0 731.0L820.8 738.8L826.2 739.3L830.0 735.9L835.7 734.9L828.0 731.0L828.4 725.3L820.5 728.1Z"/><path fill="#3e3f43" d="M901.5 1175.2L908.3 1170.0L912.1 1174.7L906.5 1180.4ZM1176.8 879.9L1176.2 876.3L1182.6 875.2L1189.6 877.3L1189.7 882.5L1181.0 883.0ZM433.9 881.5L440.1 884.1L435.0 891.9L432.6 896.0L435.6 897.0L439.8 889.8ZM447.0 895.5L448.4 904.8L442.6 901.2ZM499.3 965.5L503.4 965.5L502.7 969.7L498.6 969.2ZM502.9 936.5L504.2 946.9L502.4 954.1L500.2 959.3L502.1 944.8ZM707.6 876.3L711.3 873.2L709.4 875.8ZM712.4 877.3L714.3 875.2L714.1 877.3ZM718.7 875.8L721.5 872.7L720.4 875.8ZM721.1 871.6L723.4 870.1L722.9 871.6ZM667.0 932.9L677.3 934.9L674.6 944.3L670.1 943.8ZM1202.1 951.0L1204.2 954.1L1203.6 963.5L1201.7 956.7ZM1023.7 956.2L1029.2 956.2L1028.3 957.8L1024.2 957.8ZM790.5 815.6L798.6 814.6L797.2 817.7L794.3 816.7ZM759.8 835.3L759.8 835.3L759.8 835.3ZM1326.7 894.4L1326.8 907.4L1321.0 904.8ZM960.3 1051.2L962.1 1055.3L960.3 1054.3Z"/><path fill="#344c51" d="M77.5 923.0L83.1 920.4L80.0 916.2ZM70.7 911.1L74.4 909.0L80.3 913.7L76.4 914.7ZM142.6 745.7L154.0 742.3L147.2 743.3ZM122.0 750.7L132.1 748.2L127.7 748.7ZM1502.3 755.2L1512.0 753.2L1504.7 753.7ZM1459.1 749.2L1465.4 749.7L1460.0 748.2ZM1389.6 795.6L1393.6 792.0L1392.1 791.0L1388.1 794.6ZM1393.4 788.4L1397.0 784.9L1395.4 783.9L1391.8 787.4ZM1398.4 782.9L1400.7 778.8L1399.2 778.3L1396.8 781.8ZM1402.9 776.3L1404.0 772.2L1402.4 771.7L1401.4 775.3ZM1405.7 770.2L1406.7 765.1L1405.2 764.6L1404.2 769.2ZM1405.6 763.1L1405.6 759.1L1404.0 758.6L1403.9 762.1ZM466.4 759.1L475.5 753.2L471.6 753.2ZM279.3 759.1L289.1 763.1L290.4 771.2L286.3 770.2L280.0 762.1ZM274.5 743.3L276.5 746.7L272.6 752.2L271.3 749.2ZM524.1 778.3L533.1 781.3L525.2 780.8ZM533.6 763.6L538.9 767.7L529.9 765.1ZM1490.1 1052.7L1500.9 1060.5L1509.6 1065.7L1518.3 1070.9L1519.7 1077.7L1513.5 1073.5L1502.9 1064.2L1492.0 1056.9ZM1537.3 1097.4L1540.8 1098.4L1543.9 1107.2L1545.2 1119.7L1543.0 1119.7L1540.7 1107.2L1536.9 1102.0ZM1520.0 1125.9L1525.5 1130.6L1530.7 1138.4L1526.2 1136.8L1520.5 1129.0ZM1582.5 1112.4L1589.5 1109.8L1596.7 1106.2L1593.7 1109.3L1587.6 1116.1L1583.3 1115.0ZM1470.4 1034.1L1479.4 1039.8L1481.4 1046.0L1476.1 1041.3Z"/><path fill="#3cbdbd" d="M1086.9 898.6L1088.3 899.6L1095.3 902.2L1091.2 905.9L1098.7 913.7L1106.9 905.9L1107.7 910.0L1109.9 923.0L1116.0 941.2L1122.5 956.7L1128.8 970.7L1135.1 979.6L1139.5 974.9L1145.1 968.1L1146.4 953.6L1145.5 941.2L1154.7 933.4L1164.6 920.4L1172.4 913.7L1176.8 909.5L1181.2 908.5L1187.8 907.4L1193.3 905.3L1196.5 912.6L1197.2 907.4L1198.6 904.8L1199.8 897.0L1203.0 889.3L1204.8 882.5L1212.1 878.9L1208.8 873.7L1201.7 871.1L1191.8 876.8L1187.2 876.3L1176.3 876.8L1174.9 876.8L1162.9 876.3L1153.5 873.2L1138.8 864.9L1129.2 860.7L1125.2 852.4L1127.4 842.5L1119.7 837.4L1112.9 835.8L1109.0 837.4L1103.6 842.5L1107.9 852.9L1108.9 856.0L1107.4 863.8L1105.2 866.4L1100.6 876.8L1094.8 876.3L1090.5 881.0L1093.6 883.5L1094.6 888.2L1099.3 893.4L1089.3 895.5ZM1049.0 866.9L1052.4 860.7L1049.4 855.5L1046.0 847.7L1046.4 837.4L1053.1 838.4L1060.7 833.2L1068.2 828.1L1074.9 829.6L1082.5 825.5L1089.9 829.6L1104.2 828.6L1090.5 832.2L1090.6 842.5L1084.8 846.2L1087.0 858.1L1078.3 858.1L1075.2 865.9L1064.6 869.0L1053.5 868.0ZM1266.7 910.0L1266.2 910.0L1261.5 914.2L1258.8 920.4L1257.9 923.5L1262.1 928.2L1266.1 933.9L1272.1 938.6L1275.3 942.2L1277.5 950.0L1278.9 959.3L1278.3 963.0L1273.6 966.1L1268.2 967.6L1262.7 973.3L1259.7 977.0L1258.4 969.7L1257.7 967.6L1260.7 965.0L1264.9 960.9L1270.5 957.8L1270.4 951.5L1269.0 946.3L1269.4 942.2L1267.7 939.1L1263.6 936.0L1259.8 930.8L1255.5 926.1L1250.5 922.0L1253.7 918.8L1249.6 915.7L1245.7 913.7L1239.9 905.3L1247.7 903.3L1259.1 904.8ZM893.9 907.4L893.6 894.4L893.2 881.5L892.7 868.5L893.1 857.6L903.4 858.6L913.8 859.7L920.6 857.6L924.3 859.2L932.6 859.2L936.3 868.5L933.8 877.8L930.7 878.9L940.6 897.6L947.3 907.4L936.6 907.4L926.0 907.4L915.3 907.4L904.6 907.4ZM893.9 907.4L904.6 907.4L915.3 907.4L926.0 907.4L936.6 907.4L947.3 907.4L949.2 919.9L955.4 928.2L948.8 933.4L947.0 947.4L945.0 956.7L938.5 969.7L936.3 972.3L931.7 969.7L929.1 959.3L918.0 969.7L904.3 971.8L899.7 967.1L890.6 974.9L886.1 974.9L883.7 964.5L881.3 955.7L883.5 948.9L885.6 940.1L890.1 940.1L889.9 929.0L889.7 917.8L894.2 917.8ZM766.0 995.7L771.8 997.2L786.4 989.9L783.3 980.1L783.4 964.5L768.3 964.5L767.8 972.3L769.6 979.0L766.3 987.9ZM819.8 998.2L825.3 1000.8L825.8 1009.7L832.7 1010.2L843.4 1010.7L854.2 1011.2L855.1 1003.4L849.6 998.2L847.3 989.4L851.8 982.7L844.0 969.7L849.5 966.1L847.2 955.7L845.8 954.1L842.6 959.3L835.8 972.3L831.3 985.3L825.8 987.9ZM1280.4 1013.8L1282.7 1026.8L1287.1 1037.2L1296.2 1039.8L1305.2 1042.4L1314.5 1037.2L1312.5 1026.8L1319.5 1019.0L1321.6 1013.8L1325.7 995.7L1318.2 985.3L1311.7 990.5L1307.4 995.7L1298.5 1005.0L1289.5 1011.2ZM1216.6 992.5L1227.2 994.6L1232.4 1001.4L1240.4 1008.6L1245.0 1011.2L1252.5 1018.0L1256.6 1025.8L1259.8 1029.4L1261.5 1033.5L1266.4 1037.2L1266.3 1043.4L1265.5 1051.2L1262.3 1051.7L1259.1 1052.2L1254.8 1047.0L1249.4 1042.4L1244.5 1035.6L1240.6 1026.8L1236.1 1020.6L1232.7 1013.3L1226.6 1006.0L1221.4 999.8ZM1262.0 1056.9L1268.2 1052.7L1277.2 1055.3L1288.6 1055.3L1296.3 1057.4L1304.3 1061.6L1304.0 1066.2L1288.1 1064.2L1274.5 1062.1L1263.3 1057.9ZM1330.9 1018.0L1331.8 1016.4L1340.0 1015.9L1346.9 1016.4L1353.7 1013.3L1350.6 1019.0L1342.4 1019.0L1335.5 1019.0L1332.3 1020.0L1335.5 1025.8L1346.0 1025.8L1344.6 1028.3L1337.7 1029.4L1336.6 1033.0L1339.7 1037.2L1343.2 1045.0L1343.0 1049.6L1339.5 1047.5L1336.4 1042.4L1334.3 1036.1L1331.9 1037.7L1332.4 1050.7L1327.8 1051.2L1327.7 1042.4L1325.9 1039.8L1325.2 1034.6L1328.6 1026.8L1330.1 1021.6ZM1303.7 1063.6L1309.6 1064.7L1307.1 1067.3L1304.0 1065.7ZM1310.5 1064.7L1314.1 1064.7L1313.0 1067.8L1310.3 1067.3ZM1315.0 1065.7L1320.1 1063.6L1325.5 1065.7L1322.2 1067.8L1315.3 1068.8ZM1328.2 1065.7L1333.8 1065.2L1343.0 1063.6L1340.5 1066.8L1331.3 1067.8L1328.6 1067.3ZM1380.4 1026.3L1395.0 1026.3L1399.2 1038.7L1413.2 1030.4L1426.8 1035.1L1426.5 1046.3L1425.7 1057.6L1424.8 1068.8L1416.1 1064.2L1411.4 1065.2L1411.6 1050.1L1399.0 1045.0L1390.0 1042.4L1385.6 1036.1L1392.5 1033.5L1383.5 1029.9ZM1365.2 1013.8L1369.8 1016.4L1367.6 1025.8L1364.5 1021.6ZM1366.3 1037.2L1380.0 1037.2L1378.6 1041.3L1367.1 1040.3ZM1347.5 1064.2L1352.1 1063.6L1351.1 1065.7L1347.9 1065.7ZM1324.3 1070.9L1332.2 1074.5L1329.4 1075.1L1323.7 1072.5ZM1347.2 1069.9L1362.1 1065.2L1351.5 1073.0L1344.5 1075.1ZM1358.0 1037.7L1362.6 1038.7L1358.9 1041.3ZM1343.2 1045.0L1344.8 1050.1L1341.7 1048.6ZM1394.2 1050.1L1397.6 1053.8L1394.6 1057.4ZM1220.7 1007.1L1227.2 1011.2L1223.0 1009.7ZM1230.1 1024.2L1234.6 1029.4L1232.2 1030.4ZM1244.6 1032.0L1241.3 1037.2L1248.0 1043.4ZM1263.0 1029.9L1270.1 1036.1L1266.4 1037.7L1262.4 1033.0ZM1273.4 1035.1L1277.0 1038.2L1273.8 1038.2ZM1367.3 1009.7L1370.6 1010.2L1369.7 1013.3Z"/><path fill="#344c51" d="M1280.4 1013.8L1289.5 1011.2L1298.5 1005.0L1307.4 995.7L1311.7 990.5L1318.2 985.3L1325.7 995.7L1323.5 998.8L1318.0 999.8L1308.9 999.8L1305.5 1008.6L1296.4 1013.3L1289.5 1012.8L1283.1 1012.3Z"/><path fill="#303135" d="M899.3 801.3L901.0 796.1L903.2 792.5L906.8 787.4L910.6 780.8L915.9 780.8L922.3 783.4L918.6 786.4L923.3 791.5L929.2 789.5L935.0 786.9L941.8 791.0L948.6 796.1L958.0 803.8L956.6 808.4L946.3 809.5L935.3 805.4L930.9 803.8L922.6 804.3L914.6 807.9L906.2 807.9L901.8 805.9ZM928.8 786.4L930.3 781.8L935.9 778.3L943.8 777.3L940.4 781.8L939.0 785.9L935.0 786.9ZM980.0 785.9L981.5 783.4L987.1 780.8L994.8 778.8L997.3 780.8L1003.5 786.9L997.4 791.0L1003.2 799.7L1007.1 809.0L1008.1 814.1L1012.8 821.8L1014.7 828.1L1004.4 830.6L995.3 827.0L992.4 821.8L995.1 812.0L989.8 806.4L982.6 798.7L978.8 791.0ZM926.6 1026.8L932.1 1034.6L936.7 1029.4L937.7 1021.6L932.1 1020.0L926.6 1022.6ZM926.1 866.4L928.0 870.1L932.5 878.4L933.8 877.8L929.5 872.1ZM411.8 779.8L422.0 775.8L433.3 769.2L443.2 773.7L442.0 780.3L431.6 780.8L421.7 780.3ZM417.1 805.4L423.5 793.6L436.0 784.4L438.8 784.4L428.5 793.6L423.2 803.8ZM440.1 784.4L452.6 783.9L457.8 785.9L446.4 796.1L442.5 798.7L440.1 793.6L443.0 788.4ZM435.9 805.4L446.2 802.3L456.4 799.2L456.0 801.3L443.0 806.4ZM453.9 797.2L470.2 792.5L469.6 796.1L461.4 797.2ZM393.6 761.6L401.5 761.6L410.5 750.7L406.9 744.2L400.4 748.2ZM365.6 709.5L378.7 707.1L395.6 702.5L384.0 701.6L370.6 706.2ZM358.3 688.6L367.7 686.4L377.1 684.2L386.4 685.0L376.7 690.8L363.5 691.8ZM1194.9 755.2L1199.0 750.7L1207.7 745.7L1205.5 734.4L1205.2 738.3L1200.1 749.2L1195.2 754.2Z"/><path fill="none" stroke="#4a4c52" stroke-width="1" d="M776.0 839.4L775.5 846.2L775.1 852.9L767.1 857.6L762.5 860.6L757.9 863.6L753.2 866.6L748.6 869.6L744.0 872.7L743.8 877.8L738.8 877.8L733.8 877.8L728.8 877.8L723.9 877.8M743.7 879.9L743.4 887.2L738.5 887.0L733.6 886.8L728.7 886.7L728.4 893.2L728.2 899.6L723.2 903.3L723.3 911.1L718.8 911.1L714.3 911.1L709.9 911.1L705.4 911.1M760.6 891.9L753.0 892.4L753.4 897.9L753.8 903.4L754.3 908.9L754.7 914.4L755.1 919.9L755.6 925.5L756.0 931.0L756.5 936.5L751.1 937.5L745.7 938.6L740.4 939.6L735.0 940.6L729.6 941.7L725.9 945.8L721.0 943.8L716.2 941.7L711.4 939.6L706.6 937.5M760.6 891.9L765.0 895.3L769.4 898.8L773.8 902.2L778.2 905.7L782.7 909.2L787.1 912.6L791.7 915.7L796.3 918.8L801.0 922.0L805.9 918.8L810.8 915.6L815.7 912.4L820.6 909.2L825.4 906.0L830.3 902.8L835.1 899.6L831.5 894.4L828.0 889.3L824.4 884.1L824.8 878.9L825.3 873.7L825.7 868.5L826.1 863.3L829.6 856.6L833.1 849.8M819.2 830.1L819.6 840.0L816.1 847.7L822.6 855.5L826.1 863.3M835.1 899.6L839.8 900.9L844.5 902.2L849.0 902.2L853.5 904.3L858.0 906.3L862.5 908.3L867.1 910.3L871.6 912.3L876.1 914.3L880.7 916.4L885.2 918.4L889.7 920.4L889.7 917.8M801.0 922.0L800.7 927.9L800.4 933.9L797.7 940.6L792.5 941.8L787.3 943.1L782.2 944.3L777.2 945.0L772.2 945.8L766.9 949.5L761.7 953.1L758.8 960.4L756.0 967.6M849.0 902.2L849.8 907.4L850.6 912.6L851.4 917.8L850.0 923.3L848.6 928.7L847.3 934.2L845.9 939.6L844.5 945.0L843.0 950.5M851.8 982.7L856.4 980.4L861.0 978.2L865.5 975.9L871.2 974.1L876.9 972.3L883.7 964.5M855.1 1003.4L860.4 1001.4L865.6 999.3L870.2 999.4L874.8 999.5L879.4 999.7L883.9 999.8L890.1 997.2L896.3 994.6L901.3 995.1L906.4 995.7L913.7 998.8L922.0 1003.4M890.6 974.9L892.5 981.5L894.4 988.0L896.3 994.6M855.1 1003.4L856.6 1008.6L858.1 1013.8L859.5 1019.0L861.0 1024.2L862.5 1029.4L857.2 1036.7L851.9 1043.9L846.8 1046.9L841.8 1049.8L836.8 1052.7M836.8 1052.7L841.7 1054.0L846.6 1055.3L851.5 1056.6L856.4 1057.9L863.3 1063.1L869.0 1061.9L874.8 1060.7L880.6 1059.5L880.9 1065.9L881.2 1072.3L881.4 1078.7L886.0 1078.7L890.5 1078.7L890.4 1083.9L890.4 1089.1L894.9 1088.4L899.5 1087.8L904.0 1087.1L908.6 1086.5L913.1 1090.6L916.8 1084.9L915.0 1079.4L913.1 1073.8L911.2 1068.3L916.2 1066.2L921.3 1064.2L919.5 1057.8L917.8 1051.4L916.0 1045.0L916.2 1039.6L916.3 1034.2L916.5 1028.9M965.3 1076.1L958.7 1078.7L952.0 1081.3L946.3 1081.3L940.6 1081.3M936.2 1026.8L934.1 1032.1L932.0 1037.5L929.9 1042.8L927.7 1048.1L925.6 1053.5L923.4 1058.8L921.3 1064.2M834.8 1111.4L839.8 1111.6L844.8 1111.9L849.8 1112.0L854.9 1112.2L860.0 1112.3L865.1 1112.4L870.7 1113.7L876.4 1115.0L882.0 1114.5L887.7 1114.0L895.8 1114.0L902.0 1110.6L908.2 1107.2L913.7 1104.9L919.2 1102.6L925.2 1098.4L931.2 1094.3M871.2 1150.3L871.4 1143.0L871.5 1135.8L876.0 1135.8L876.1 1130.6L876.2 1125.4L876.3 1120.2L876.4 1115.0M919.2 1102.6L924.8 1105.4L930.3 1108.3L930.1 1114.2L929.9 1120.2L927.6 1125.9L925.3 1131.6L923.0 1137.3M895.8 1114.0L899.5 1119.7L903.2 1125.4L907.5 1131.1L911.8 1136.8M729.3 957.2L724.1 956.5L718.8 955.7L714.3 956.2L709.7 956.7L705.2 957.2M720.3 974.9L725.6 972.3L730.9 969.7L733.0 978.5M744.6 969.7L750.3 968.7L756.0 967.6L761.7 968.7L767.4 969.7L768.3 964.5M788.3 989.4L788.1 984.1L788.0 978.8L787.8 973.5L787.6 968.2L787.5 963.0L785.2 964.5M797.5 960.9L792.5 961.9L787.5 963.0M974.6 956.7L977.9 961.4M968.7 1001.4L973.2 1000.8L977.8 999.1L982.4 997.4L986.9 995.7L991.1 990.5L995.3 985.3L999.4 980.1L999.6 974.5L999.8 969.0L999.9 963.5M453.2 960.4L450.4 967.1L450.5 972.3L450.8 977.5L451.8 985.3L456.4 985.3L460.9 985.3L466.5 987.3L472.2 989.4L470.5 998.2L472.2 1004.7L473.9 1011.2M419.3 1014.3L427.9 1019.5L435.7 1022.6L444.1 1029.4L449.5 1034.1L454.9 1038.7L460.4 1043.4M413.1 1039.2L419.3 1047.5L423.7 1042.4L428.2 1037.2L431.9 1029.9L435.7 1022.6M464.3 1078.7L465.8 1083.9L467.3 1089.1L467.8 1095.6L468.4 1102.0L467.8 1107.2L467.3 1112.4L472.6 1120.2L474.0 1126.7L475.5 1133.2L479.5 1139.9M463.6 1116.6L467.3 1112.4M501.6 1137.3L502.7 1131.4L503.8 1125.4L509.0 1125.1L514.2 1124.7L519.5 1124.4L518.9 1118.4L518.3 1112.4M507.0 977.5L506.0 983.2L505.0 988.9L504.0 994.6M519.2 991.5L518.1 997.1L517.1 1002.7L516.1 1008.2L515.1 1013.8M533.8 992.5L533.7 998.2L533.6 1004.0L533.5 1009.7M938.1 831.7L942.4 831.7L946.9 831.2L951.5 830.6L956.1 830.1L960.6 829.6L965.2 829.1L970.3 828.8L975.4 828.6L973.6 822.9L971.8 817.2M958.4 806.4L962.8 807.4L967.1 808.4L973.7 815.6M965.2 829.1L963.5 835.8L961.6 842.5L956.7 845.4L951.7 848.3L956.9 851.9L962.0 855.5L967.9 860.4L973.8 865.2L979.6 870.1L987.6 870.6L993.9 866.9M975.4 828.6L979.6 837.4L981.5 843.8L983.3 850.3L987.6 855.5L991.9 860.7L993.9 866.9M939.0 851.9L943.3 850.7L947.5 849.5L951.7 848.3M936.8 868.5L940.8 863.3L944.8 858.1L951.7 848.3M974.8 936.5L980.4 931.3L985.0 932.0L989.5 932.7L994.1 933.4L998.5 931.3L1002.9 929.2L1007.3 927.1L1011.7 925.1L1016.1 923.0L1021.3 917.8L1026.5 912.6L1031.7 907.4L1029.1 903.8L1023.6 901.0L1018.0 898.3L1012.4 895.5M1016.1 923.0L1018.9 929.2L1021.8 935.4M1014.7 828.1L1018.7 826.5L1022.7 825.0L1026.7 823.4L1032.2 826.2L1037.7 828.9L1043.2 831.7L1047.2 836.9M1006.1 803.8L1009.2 798.7L1012.3 793.6L1015.4 788.4L1020.2 787.2L1025.0 785.9L1030.8 788.7L1036.6 791.5L1041.7 792.7L1046.8 793.9L1052.0 795.1L1059.2 799.2L1064.9 804.9L1070.6 810.5L1074.0 807.8L1077.5 805.0L1080.9 802.3L1085.6 800.5L1090.3 798.7L1094.6 799.2L1099.6 800.0L1104.6 800.9L1109.6 801.7L1114.6 802.5L1119.6 803.3M1019.4 807.4L1024.1 803.8L1028.7 800.2L1033.7 801.4L1038.7 802.6L1043.7 803.8L1048.3 809.0L1052.9 814.1L1057.4 819.3L1062.9 823.4L1068.5 827.5M1070.6 810.5L1074.6 809.7L1078.5 809.0L1084.5 811.5L1090.4 814.1L1096.2 816.7M1074.9 829.6L1077.8 823.1L1080.5 816.7L1085.8 816.7L1091.0 816.7L1096.2 816.7M967.1 808.4L971.1 807.1L975.1 805.7L979.0 804.3M1230.6 969.7L1230.9 964.5L1231.2 959.3L1231.5 954.1L1230.3 948.9L1229.1 943.8L1227.7 938.6L1225.1 932.1L1222.5 925.6L1227.1 920.9L1231.7 916.2L1236.2 910.0M1231.7 916.2L1235.5 922.7L1239.2 929.2L1245.5 928.7L1250.5 932.6L1255.5 936.5L1258.1 942.2L1260.5 947.9L1265.0 947.1L1269.4 946.3M1247.8 958.3L1248.4 952.8L1249.1 947.4L1254.8 947.6L1260.5 947.9M747.4 804.3L752.4 805.1L757.3 805.9L755.9 811.3L754.5 816.7L753.0 822.6L751.6 828.6M813.7 783.4L818.5 782.5L823.2 781.7L828.0 780.8L835.7 778.3L841.4 780.8M841.6 769.7L845.8 769.9L850.1 770.0L854.4 770.2L860.1 763.6M854.5 773.2L859.0 772.9L863.4 772.6L867.8 772.3L872.2 772.0L876.6 771.7M854.5 773.2L851.9 779.3L857.1 781.8L862.3 784.4L868.4 782.9M862.3 784.4L865.5 791.0L863.7 797.2L868.1 801.3L873.3 801.8L878.6 802.3L878.0 796.6L877.5 791.0M878.9 807.4L883.7 806.7L888.6 806.1L893.4 805.4L897.5 804.6L901.6 803.8M868.8 815.6L872.3 809.5L876.4 808.4L880.5 807.4M879.8 755.7L884.2 755.5L888.6 755.3L893.1 755.2L897.7 755.3L902.3 755.5L906.9 755.7L911.6 752.7M876.3 767.7L878.4 773.7L883.3 773.2L888.2 772.7L893.1 772.2L898.0 772.7L902.9 773.2L908.2 781.3L900.9 785.9M878.3 743.8L883.1 743.0L887.8 742.3L890.8 734.4L894.1 731.0M867.9 733.5L871.7 733.0L875.4 732.5L879.1 732.0L884.0 733.5L888.9 734.9M879.5 724.3L883.5 724.8L887.5 725.3L891.6 725.7M800.3 756.7L805.0 756.9L809.7 757.2L810.5 758.1M272.2 852.9L277.6 852.4L283.1 851.9M362.6 946.3L363.3 940.6L364.1 934.9L364.9 929.2L370.3 929.2L378.5 928.7L383.0 925.6M378.5 928.7L377.1 939.1L381.5 940.1M375.2 946.9L383.2 954.1M390.5 964.0L395.0 964.3L399.6 964.5M399.6 977.5L402.6 971.8"/><path fill="none" stroke="#46585c" stroke-width="1" d="M293.7 768.2L297.8 768.2L301.9 768.2L306.1 768.2L310.2 768.2L314.3 768.2L318.4 768.2L322.6 768.2L326.7 768.2L330.8 768.2L335.0 768.2L339.1 768.2L343.2 768.2L347.4 768.2L351.5 768.2L355.6 768.2L359.8 768.2L363.9 768.2L368.0 768.2L372.1 768.2L376.3 768.2L380.4 768.2L384.5 768.2L388.7 768.2L392.8 768.2L396.9 768.2L401.1 768.2L405.2 768.2L406.3 766.2L410.0 767.6L413.8 769.0L417.6 770.4L421.4 771.8L425.3 773.2L428.5 774.8L431.8 776.3L435.1 777.8L438.4 779.3L441.8 780.8L444.4 783.9L447.0 786.9L444.7 792.8L442.5 798.7L438.1 802.3L442.6 801.6L447.1 801.0L451.7 800.4L456.2 799.7L463.2 796.1L470.2 792.5L478.0 788.4L482.5 788.4L487.0 788.4L491.5 788.4L500.8 780.8L505.9 776.3L510.9 777.8L508.1 784.9L509.7 789.5M326.1 670.3L320.2 674.9L314.4 679.5L308.5 684.2L302.7 688.8L297.0 693.5L291.5 698.3L285.9 703.1L280.4 707.9L274.8 712.7L277.7 713.4L280.5 714.1L281.1 719.0L286.5 717.3L291.9 715.6L292.7 718.5L293.5 721.4L292.5 726.2L291.6 731.0L290.3 738.3M831.6 719.0L833.4 714.1L835.1 709.5L834.4 704.8L833.8 700.2L837.7 694.3L841.5 688.6L844.7 683.0L847.8 677.5L851.1 676.4L854.3 675.2L857.6 674.1L860.8 673.0M874.3 687.3L871.6 679.7L868.0 677.5L864.4 675.2L860.8 673.0M860.8 673.0L864.6 673.6L868.4 674.1L872.3 674.7L876.1 675.2L879.9 674.2L883.6 673.2L887.3 672.1L890.9 670.8L894.5 669.5M819.1 768.2L816.2 775.3M842.8 743.8L844.6 750.7L845.3 759.1M941.3 1013.8L938.9 1006.8L936.6 999.8L943.4 995.7L949.2 999.3L954.9 1002.9L961.8 1003.4L968.7 1001.4M936.7 1026.8L936.7 1019.0L941.3 1013.8M529.3 1178.3L532.3 1172.6L535.4 1166.9L539.5 1164.6L543.6 1162.2L538.9 1154.5M1136.5 767.7L1134.5 772.7L1132.4 777.8M1329.9 802.3L1329.8 799.7L1327.3 794.6L1324.9 789.5L1328.6 787.7L1332.2 785.9L1330.3 778.8L1328.4 771.7L1324.7 773.2L1321.1 774.8L1315.1 771.7L1309.2 768.7L1304.0 766.8L1298.9 765.0L1293.8 763.1L1287.4 756.9L1281.0 750.7L1275.9 749.0L1270.9 747.4L1265.8 745.7L1263.1 747.4L1260.3 749.0L1257.6 750.7L1259.0 755.7L1260.3 760.6L1256.6 765.6L1250.6 764.1M1103.6 842.5L1109.0 837.4L1115.4 837.4L1107.0 829.6M1323.9 826.0L1326.8 822.9L1329.9 821.3"/><path fill="none" stroke="#33a0a2" stroke-width="1" d="M893.9 907.4L898.8 907.4L903.6 907.4L908.5 907.4L913.3 907.4L918.2 907.4L923.0 907.4L927.9 907.4L932.8 907.4L937.6 907.4L942.5 907.4L947.3 907.4M1136.1 872.1L1143.1 875.8L1150.1 879.4L1154.8 881.0L1159.6 882.5L1164.4 883.2L1169.3 883.9L1174.1 884.6L1172.3 876.8M1176.7 908.5L1180.7 904.8L1177.8 896.0L1178.8 890.8L1175.0 886.7L1180.1 885.6L1186.9 888.7L1193.7 891.9L1193.1 897.0L1194.4 902.2L1195.7 907.4L1197.0 912.6M1426.8 1035.1L1426.7 1040.7L1426.5 1046.3L1426.1 1052.0L1425.7 1057.6L1425.3 1063.2L1424.8 1068.8"/></svg></div><!--/map-->

<!-- zoom control -->
<div class="a" style="left:64px;top:1436px;width:70px;height:140px;background:#fff;border-radius:13px"></div>
<div class="a" style="left:64px;top:1503px;width:70px;height:2px;background:#e4e4ea"></div>
<svg class="a" style="left:64px;top:1436px" width="70" height="140" viewBox="0 0 70 140"><g stroke="#000" fill="none" stroke-width="3.6"><circle cx="30" cy="29" r="11.5"/><path d="M38.5 37.5L50 49" stroke-width="4.2"/><path d="M30 23V35M24 29H36" stroke-width="2.6"/><circle cx="30" cy="100" r="11.5"/><path d="M38.5 108.5L50 120" stroke-width="4.2"/><path d="M24 100H36" stroke-width="2.6"/></g></svg>

<!-- disclaimer -->
<div class="a" style="left:80px;top:1672px;font-size:25px;line-height:32px;letter-spacing:0.65px;color:#77787c;white-space:nowrap">The boundaries and names shown and the<br>designations used on this map do not imply official<br>endorsement or acceptance by the United Nations.</div>

<!-- alerts -->
<div class="a hdr" style="left:2003px;top:436px">JUL 27 2022 - AUG 03 2022</div>
<div class="hline" style="top:486px"></div>
<div class="card" style="top:544px;height:395px">
 <div class="bar" style="background:#f65f5b"></div>
 <div class="dot" style="background:#f65f5b"></div>
 <div class="risk">HIGH RISK</div><div class="risk" style="left:268px">|</div><div class="risk" style="left:319px">A DAY AGO</div>
 <div class="ttl">Post Suggests Vaccines Don’t Work After U.S.<br>President Biden Tests Positive For COVID-19</div>
 <div class="pill pt" style="left:48px;top:204px;width:152px">VIETNAM</div>
 <div class="pill pt" style="left:209px;top:204px;width:178px">INDONESIA</div>
 <div class="pill pg" style="left:48px;top:261px;width:422px">SAFETY, EFFICACY &amp; NECESSITY</div>
 <div class="pill pg" style="left:479px;top:261px;width:171px">BOOSTERS</div>
 <div class="lnk" style="top:335px">COVID-19</div>
</div>
<div class="card" style="top:955px;height:394px">
 <div class="bar" style="background:#fdd65b"></div>
 <div class="dot" style="background:#fdd65b"></div>
 <div class="risk">MEDIUM RISK</div><div class="risk" style="left:312px">|</div><div class="risk" style="left:364px">A DAY AGO</div>
 <div class="ttl">Push For “Precaution Dose” Of COVID-19<br>Vaccine Fuels Misinformation About Boosters</div>
 <div class="pill pt" style="left:48px;top:204px;width:123px">NEPAL</div>
 <div class="pill pt" style="left:180px;top:204px;width:113px">INDIA</div>
 <div class="pill pg" style="left:302px;top:204px;width:171px">BOOSTERS</div>
 <div class="pill pg" style="left:48px;top:261px;width:422px">SAFETY, EFFICACY &amp; NECESSITY</div>
 <div class="lnk" style="top:335px">COVID-19</div>
</div>
<div class="a hdr" style="left:2003px;top:1503px">JUL 13 2022 - JUL 20 2022</div>
<div class="hline" style="top:1551px"></div>
<div class="card" style="top:1609px;height:400px">
 <div class="bar" style="background:#fdd65b"></div>
 <div class="dot" style="background:#fdd65b"></div>
 <div class="risk">MEDIUM RISK</div><div class="risk" style="left:312px">|</div><div class="risk" style="left:363px">15 DAYS AGO</div>
 <div class="ttl">Online Scammer Claims They Will Remove<br>Toxins Caused By COVID-19 Vaccines</div>
</div>
<div class="a" style="left:1990px;top:1678px;width:890px;height:122px;background:linear-gradient(rgba(48,49,53,0),#303135 96%)"></div>
</body></html>
